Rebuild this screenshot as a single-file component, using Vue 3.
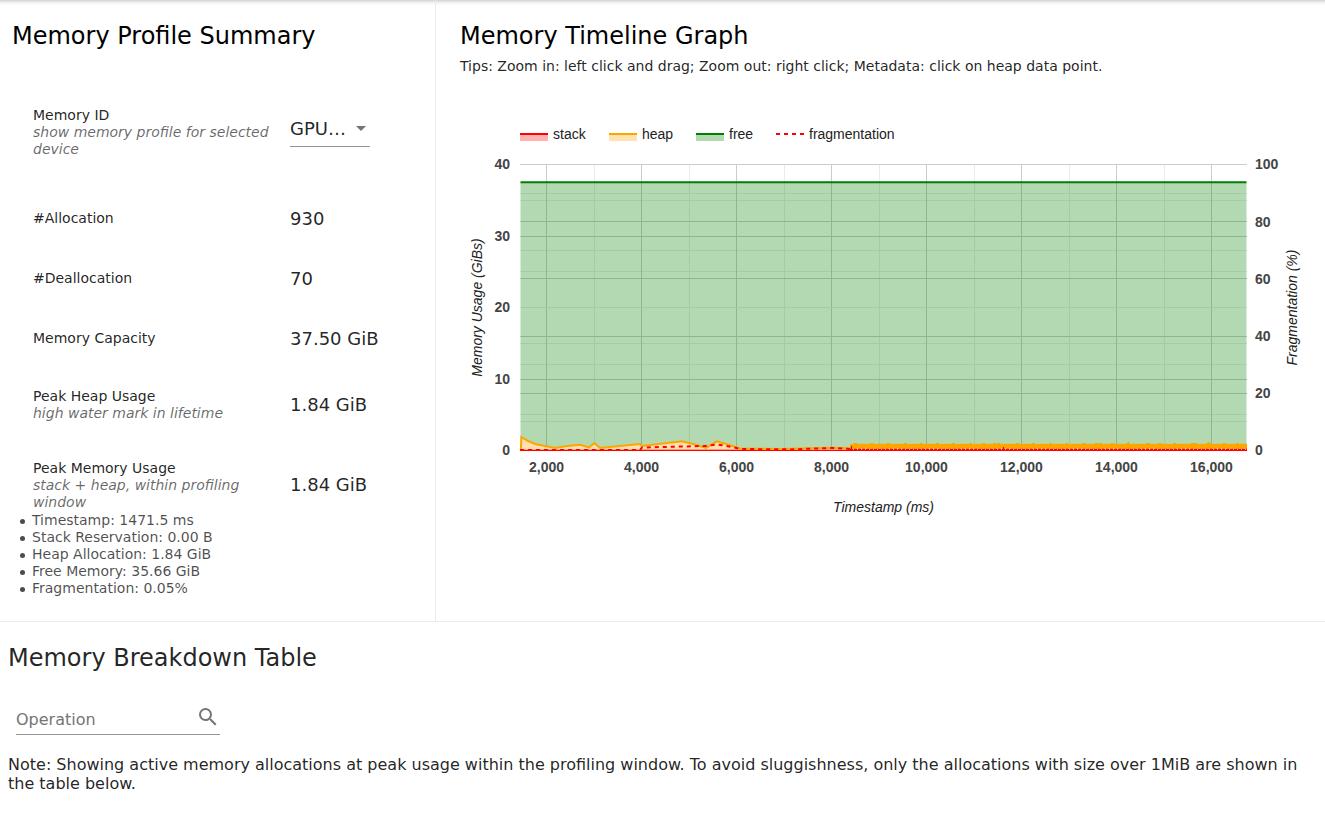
<script setup>
const facts = [
  { name: '#Allocation', value: '930', kind: 'single' },
  { name: '#Deallocation', value: '70', kind: 'single' },
  { name: 'Memory Capacity', value: '37.50 GiB', kind: 'single' },
  { name: 'Peak Heap Usage', hint: 'high water mark in lifetime', value: '1.84 GiB', kind: 'double' },
  { name: 'Peak Memory Usage', hint: 'stack + heap, within profiling window', value: '1.84 GiB', kind: 'triple' },
]
const details = [
  'Timestamp: 1471.5 ms',
  'Stack Reservation: 0.00 B',
  'Heap Allocation: 1.84 GiB',
  'Free Memory: 35.66 GiB',
  'Fragmentation: 0.05%',
]

// Chart coordinates are in pixels within an 865 x 420 drawing.
const minorRows = [83, 90, 140, 161, 233, 254, 304, 311]
const majorRows = [111, 126, 168, 226, 269, 283]
const minorCols = [134, 229, 324, 419, 514, 609, 704]
const ticks = [
  [86, '2,000'], [181, '4,000'], [276, '6,000'], [371, '8,000'],
  [466, '10,000'], [561, '12,000'], [656, '14,000'], [751, '16,000'],
]
const leftTicks = [[54, 40], [126, 30], [197, 20], [269, 10], [340, 0]]
const rightTicks = [[54, 100], [112, 80], [169, 60], [226, 40], [283, 20], [340, 0]]
const bumps = [
  395, 411, 428, 445, 461, 477, 493, 510, 523, 534, 538, 557, 573, 590, 606, 623, 636, 640,
  652, 667, 687, 699, 714, 732, 735, 747, 750, 764, 777,
]
const heap =
  '60.8,340 61.4,327 67,330.5 75,334 95,338 105,336.2 120,334.8 129,337.5 134.3,333 140,338 180,334 182,336 222,331.3 233,334 246,337.8 257,331.3 266,334 280,338.5 320,339 372,337.7 390,338.3'
</script>

<template>
  <main class="page">
    <div class="top-row">
      <section class="summary">
        <h2>Memory Profile Summary</h2>
        <div class="fact selector">
          <div class="label">Memory ID<div class="hint">show memory profile for selected device</div></div>
          <div class="select"><span>GPU…</span><i class="arrow"></i></div>
        </div>
        <div v-for="f in facts" :key="f.name" class="fact" :class="f.kind">
          <div class="label">{{ f.name }}<div v-if="f.hint" class="hint">{{ f.hint }}</div></div>
          <div class="value">{{ f.value }}</div>
        </div>
        <ul class="details">
          <li v-for="d in details" :key="d">{{ d }}</li>
        </ul>
      </section>
      <section class="timeline">
        <h2>Memory Timeline Graph</h2>
        <p class="tips">Tips: Zoom in: left click and drag; Zoom out: right click; Metadata: click on heap data point.</p>
        <svg class="chart" width="865" height="420" viewBox="0 0 865 420">
          <g class="legend">
            <rect x="60" y="24" width="28" height="7" fill="#f00" opacity=".3" />
            <path d="M60 24h28" stroke="#f00" stroke-width="2" />
            <text x="93" y="29">stack</text>
            <rect x="149" y="24" width="28" height="7" fill="#ffa500" opacity=".3" />
            <path d="M149 24h28" stroke="#ffa500" stroke-width="2" />
            <text x="182" y="29">heap</text>
            <rect x="236" y="24" width="28" height="7" fill="#008000" opacity=".3" />
            <path d="M236 24h28" stroke="#008000" stroke-width="2" />
            <text x="269" y="29">free</text>
            <path d="M316 24h28" stroke="#f00" stroke-width="2" stroke-dasharray="4 4" />
            <text x="349" y="29">fragmentation</text>
          </g>
          <g fill="#ebebeb" shape-rendering="crispEdges">
            <rect v-for="x in minorCols" :key="x" :x="x" y="54" width="1" height="287" />
            <rect v-for="y in minorRows" :key="y" x="60" :y="y" width="727" height="1" />
          </g>
          <g fill="#ccc" shape-rendering="crispEdges">
            <rect x="60" y="54" width="727" height="1" />
            <rect v-for="y in majorRows" :key="y" x="60" :y="y" width="727" height="1" />
            <rect v-for="t in ticks" :key="t[1]" :x="t[0]" y="54" width="1" height="287" />
          </g>
          <rect x="60" y="197" width="727" height="1" fill="#ebebeb" />
          <rect x="60.5" y="72.2" width="726" height="268.3" fill="#008000" opacity=".3" />
          <path d="M60.5 72.2H786.5" stroke="#008000" stroke-width="2" />
          <polygon :points="heap + ' 390,340.5 60.5,340.5'" fill="#ffe1b0" />
          <path d="M60 339.5H787" stroke="#ff9c80" stroke-width="1" />
          <polyline :points="heap" fill="none" stroke="#ffa500" stroke-width="2" />
          <rect x="390" y="334" width="397" height="5" fill="#ffa500" />
          <path d="M393 333.5H787" stroke="#ffa500" stroke-width="1" stroke-dasharray="2 2" opacity=".35" />
          <path v-for="x in bumps" :key="x" :d="`M${x - 1} 333.5h3`" stroke="#ffa500" stroke-width="1" />
          <path d="M668.5 331.5v3M748.5 331.5v3" stroke="#ffa500" stroke-width="1.2" />
          <path d="M392 338.5H787" stroke="#ffd080" stroke-width="1" stroke-dasharray="1.5 3" />
          <path d="M60 340H180L182 337.5L246 335.9L257 334.4L266 335.8L281 339L330 339.4L372 338L390 339" fill="none" stroke="#f00" stroke-width="2" stroke-dasharray="4 4" />
          <path d="M390 339.5H787" stroke="#f00" stroke-width="1.4" stroke-dasharray="3 1" />
          <path d="M391.5 336v4M543.5 337v3" stroke="#f00" stroke-width="1.2" />
          <rect x="60" y="340" width="727" height="1" fill="#f00" />
          <g class="tick" text-anchor="middle">
            <text v-for="t in ticks" :key="t[1]" :x="t[0] + 0.5" y="362">{{ t[1] }}</text>
          </g>
          <g class="tick" text-anchor="end">
            <text v-for="t in leftTicks" :key="t[1]" x="50" :y="t[0] + 5">{{ t[1] }}</text>
          </g>
          <g class="tick">
            <text v-for="t in rightTicks" :key="t[1]" x="795" :y="t[0] + 5">{{ t[1] }}</text>
          </g>
          <g class="title" text-anchor="middle">
            <text x="423.5" y="402">Timestamp (ms)</text>
            <text transform="translate(22 197.5) rotate(-90)">Memory Usage (GiBs)</text>
            <text transform="translate(837 197.5) rotate(-90)">Fragmentation (%)</text>
          </g>
        </svg>
      </section>
    </div>
    <section class="breakdown">
      <h2>Memory Breakdown Table</h2>
      <div class="search">
        <span class="placeholder">Operation</span>
        <svg width="24" height="24" viewBox="0 0 24 24"><path fill="#757575" d="M15.5 14h-.79l-.28-.27A6.47 6.47 0 0 0 16 9.5 6.5 6.5 0 1 0 9.5 16c1.61 0 3.09-.59 4.23-1.57l.27.28v.79l5 4.99L20.49 19l-4.99-5zm-6 0C7.01 14 5 11.99 5 9.5S7.01 5 9.5 5 14 7.01 14 9.5 11.99 14 9.5 14z" /></svg>
      </div>
      <p class="note">Note: Showing active memory allocations at peak usage within the profiling window. To avoid sluggishness, only the allocations with size over 1MiB are shown in the table below.</p>
    </section>
  </main>
</template>

<style>
body { margin: 0; background: #fff; }
</style>

<style scoped>
.page {
  height: 816px;
  overflow: hidden;
  font-family: "DejaVu Sans", sans-serif;
  color: rgba(0, 0, 0, 0.87);
  background: linear-gradient(#d2d2d2, #ececec 2px, #fafafa 4px, #fff 6px) no-repeat 0 0 / 100% 6px;
}
h2 { margin: 0; font-size: 24px; font-weight: 400; line-height: 32px; }
.top-row {
  display: flex;
  box-sizing: border-box;
  height: 622px;
  border-bottom: 1px solid #ebebeb;
}
.summary {
  box-sizing: border-box;
  width: 436px;
  padding: 20px 12px 0;
  border-right: 1px solid #ebebeb;
}
.summary h2, .timeline h2 { color: #000; }
.fact {
  display: flex;
  align-items: center;
  box-sizing: border-box;
  height: 60px;
  padding-left: 21px;
}
.selector { height: 52px; margin: 54px 0 30px; }
.double { height: 72px; padding-top: 2px; }
.triple { height: 88px; padding-top: 2px; }
.label { width: 240px; margin-right: 17px; font-size: 14px; line-height: 17px; }
.hint { color: rgba(0, 0, 0, 0.6); font-style: italic; }
.value { font-size: 18px; line-height: 22px; white-space: nowrap; }
.single .value { padding-top: 2px; }
.select {
  display: flex;
  align-items: center;
  justify-content: space-between;
  box-sizing: border-box;
  width: 80px;
  height: 35px;
  margin-bottom: 6px;
  padding-right: 4px;
  border-bottom: 1px solid #949494;
  font-size: 18px;
}
.arrow { border: 5px solid transparent; border-top-color: #757575; border-bottom: 0; }
.details {
  margin: -16px 0 0;
  padding: 0 0 0 8px;
  list-style: none;
  font-size: 14px;
  line-height: 17px;
  color: rgba(0, 0, 0, 0.7);
}
.details li { display: flex; align-items: center; }
.details li::before {
  content: "";
  width: 5px;
  height: 5px;
  margin: 2px 7px 0 0;
  border-radius: 50%;
  background: currentColor;
}
.timeline { padding: 20px 0 0 24px; }
.tips { margin: 6px 0 0; font-size: 14px; line-height: 17px; }
.chart {
  display: block;
  margin-top: 35px;
  font-family: "Liberation Sans", Arial, sans-serif;
  font-size: 14px;
}
.legend text { fill: #222; }
.tick text { fill: #444; font-weight: 700; }
.title text { fill: #222; font-style: italic; }
.breakdown { padding: 20px 8px 0; }
.search {
  display: flex;
  align-items: center;
  justify-content: space-between;
  box-sizing: border-box;
  width: 204px;
  height: 36px;
  margin: 25px 0 0 8px;
  border-bottom: 1px solid #949494;
  font-size: 16px;
  color: #757575;
}
.placeholder { padding-top: 6px; }
.note { margin: 20px 0 0; font-size: 16px; line-height: 19px; }
</style>
